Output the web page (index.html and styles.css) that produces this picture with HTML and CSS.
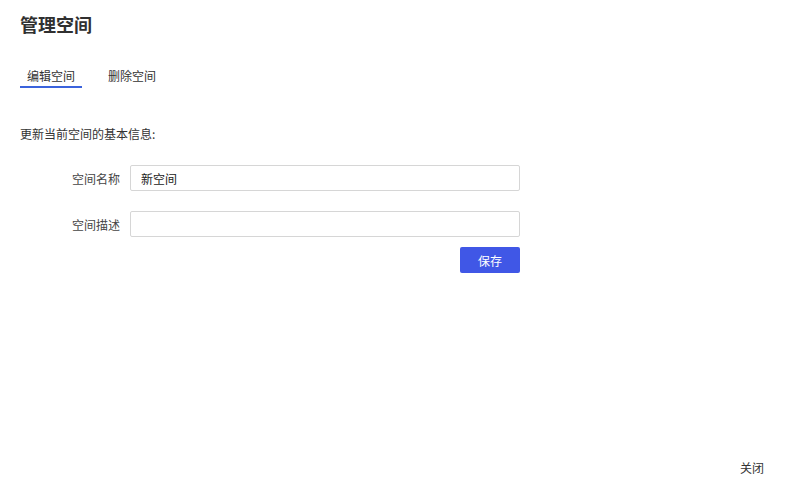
FILE: index.html
```html
<!DOCTYPE html>
<html lang="zh-CN">
<head>
<meta charset="utf-8">
<title>管理空间</title>
<link rel="stylesheet" href="styles.css">
</head>
<body>
<div class="modal">
  <div class="content">
    <h1 class="title">管理空间</h1>
    <div class="tabs">
      <div class="tab active">编辑空间</div>
      <div class="tab">删除空间</div>
    </div>
    <p class="desc">更新当前空间的基本信息:</p>
    <form class="form">
      <div class="row">
        <label class="label">空间名称</label>
        <input class="input" type="text" value="新空间">
      </div>
      <div class="row">
        <label class="label">空间描述</label>
        <input class="input" type="text" value="">
      </div>
      <div class="actions">
        <button class="btn-primary" type="button">保存</button>
      </div>
    </form>
  </div>
  <div class="footer">
    <span class="close">关闭</span>
  </div>
</div>
</body>
</html>
```
FILE: styles.css
```css
html, body {
  margin: 0;
  padding: 0;
  background: #fff;
}
body {
  font-family: "Noto Sans CJK SC", "Noto Sans", sans-serif;
  color: #333;
  font-size: 12px;
}
.modal {
  height: 500px;
  display: flex;
  flex-direction: column;
}
.content {
  padding: 12px 20px 0;
}
.title {
  margin: 0;
  font-size: 18px;
  line-height: 24px;
  font-weight: 700;
  color: #303030;
}
.tabs {
  display: flex;
  gap: 19px;
  margin-top: 30px;
}
.tab {
  padding: 0 7px;
  line-height: 20px;
  font-size: 12px;
  border-bottom: 2px solid transparent;
  color: #333;
}
.tab.active {
  border-bottom-color: #3b63dc;
}
.desc {
  margin: 36px 0 0;
  line-height: 20px;
  font-size: 12px;
  color: #333;
}
.form {
  width: 500px;
  margin-top: 21px;
}
.row {
  display: flex;
  align-items: center;
  margin-bottom: 20px;
}
.label {
  width: 110px;
  flex: none;
  text-align: right;
  padding-right: 10px;
  box-sizing: border-box;
  color: #444;
  font-size: 12px;
}
.input {
  width: 390px;
  height: 26px;
  box-sizing: border-box;
  border: 1px solid #d6d6d6;
  border-radius: 2px;
  padding: 0 10px;
  font-family: inherit;
  font-size: 12px;
  color: #222;
  outline: none;
}
.actions {
  display: flex;
  justify-content: flex-end;
  margin-top: -10px;
}
.btn-primary {
  width: 60px;
  height: 26px;
  border: none;
  border-radius: 2px;
  background: #4057e6;
  color: #fff;
  font-family: inherit;
  font-size: 12px;
  padding: 0;
}
.footer {
  margin-top: auto;
  display: flex;
  justify-content: flex-end;
  padding: 0 36px 22px;
}
.close {
  line-height: 20px;
  font-size: 12px;
  color: #333;
}
```
